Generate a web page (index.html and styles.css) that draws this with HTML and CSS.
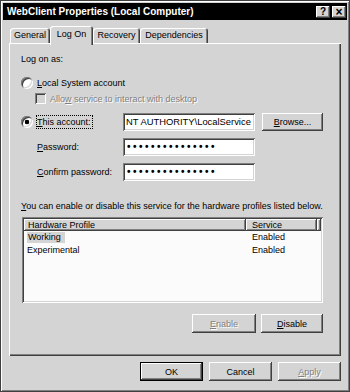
FILE: index.html
```html
<!DOCTYPE html>
<html>
<head>
<meta charset="utf-8">
<link rel="stylesheet" href="styles.css">
</head>
<body>
<div class="window">
  <div class="titlebar">
    <span class="title">WebClient Properties (Local Computer)</span>
    <div class="tb-buttons"><span class="tb-btn">?</span><span class="tb-btn tb-close">×</span></div>
  </div>
  <div class="tabs">
    <div class="tab t-general">General</div>
    <div class="tab selected t-logon">Log On</div>
    <div class="tab t-recovery">Recovery</div>
    <div class="tab t-deps">Dependencies</div>
  </div>
  <div class="panel">
    <div class="legend">Log on as:</div>
    <div class="radio-row"><span class="radio"></span><span><u>L</u>ocal System account</span></div>
    <div class="check-row"><span class="check"></span><span class="disabled">Allo<u>w</u> service to interact with desktop</span></div>
    <div class="field-row">
      <div class="lbl-radio"><span class="radio checked"></span><span class="focus"><u>T</u>his account:</span></div>
      <div class="field">NT AUTHORITY\LocalService</div>
      <button class="btn browse"><u>B</u>rowse...</button>
    </div>
    <div class="field-row pw-row">
      <div class="lbl"><u>P</u>assword:</div>
      <div class="field pw">•••••••••••••••</div>
    </div>
    <div class="field-row pw-row">
      <div class="lbl"><u>C</u>onfirm password:</div>
      <div class="field pw">•••••••••••••••</div>
    </div>
    <div class="note"><u>Y</u>ou can enable or disable this service for the hardware profiles listed below.</div>
    <div class="list">
      <div class="list-head">
        <div class="hcol c1">Hardware Profile</div>
        <div class="hcol c2">Service</div>
        <div class="hcol c3"></div>
      </div>
      <div class="list-row"><span class="c1"><span class="sel">Working</span></span><span class="c2">Enabled</span></div>
      <div class="list-row"><span class="c1">Experimental</span><span class="c2">Enabled</span></div>
    </div>
    <div class="list-buttons">
      <button class="btn btn-enable disabled"><u>E</u>nable</button>
      <button class="btn btn-disable"><u>D</u>isable</button>
    </div>
  </div>
  <div class="footer">
    <button class="btn default">OK</button>
    <button class="btn">Cancel</button>
    <button class="btn disabled"><u>A</u>pply</button>
  </div>
</div>
</body>
</html>
```

FILE: styles.css
```css
html, body {
  margin: 0;
  padding: 0;
  background: #d4d4d4;
}
body {
  font-family: "Liberation Sans", Arial, sans-serif;
  font-size: 9px;
  color: #000;
}
.window {
  width: 350px;
  height: 392px;
  box-sizing: border-box;
  background: #d4d4d4;
  border: 1px solid #404040;
  box-shadow: inset 1px 1px #fff, inset -1px -1px #808080;
  padding: 2px;
  display: flex;
  flex-direction: column;
}
.titlebar {
  height: 17px;
  flex: none;
  background: #000;
  color: #fff;
  display: flex;
  align-items: center;
  justify-content: space-between;
  padding: 0 1px 0 4px;
  font-weight: bold;
  font-size: 10px;
}
.tb-buttons {
  display: flex;
  gap: 2px;
}
.tb-btn {
  width: 14px;
  height: 12px;
  background: #d4d4d4;
  box-shadow: inset -1px -1px #404040, inset 1px 1px #fff, inset -2px -2px #808080;
  color: #000;
  font-size: 10px;
  font-weight: bold;
  line-height: 12px;
  text-align: center;
}
.tb-close {
  font-size: 12px;
}
.tabs {
  flex: none;
  display: flex;
  align-items: flex-end;
  height: 25px;
  margin: 0 6px -2px;
  padding-left: 1px;
  z-index: 1;
}
.tab {
  height: 15px;
  margin-bottom: 2px;
  box-sizing: border-box;
  background: #d4d4d4;
  border-radius: 3px 3px 0 0;
  box-shadow: inset 1px 1px #fff, inset -1px 0 #404040, inset -2px 0 #808080;
  text-align: center;
  line-height: 15px;
}
.t-general { width: 40px; }
.t-logon { width: 43px; }
.t-recovery { width: 47px; }
.t-deps { width: 68px; }
.tab.selected {
  height: 19px;
  margin-bottom: 0;
  line-height: 16px;
}
.panel {
  flex: none;
  margin: 0 6px;
  height: 313px;
  box-sizing: border-box;
  box-shadow: inset 1px 1px #fff, inset -1px -1px #404040, inset -2px -2px #808080;
  padding: 10px 12px 0 12px;
}
.legend {
  height: 13px;
  line-height: 13px;
}
.radio-row {
  display: flex;
  align-items: center;
  gap: 4px;
  height: 13px;
  margin-top: 10px;
}
.radio {
  flex: none;
  width: 12px;
  height: 12px;
  border-radius: 50%;
  background: #fff;
  box-shadow: inset 1px 1px #808080, inset -1px -1px #fff, inset 2px 2px #404040, inset -2px -2px #d4d4d4;
}
.radio.checked {
  background: radial-gradient(circle at 50% 50%, #000 0, #000 2px, #fff 2.6px);
}
.check-row {
  display: flex;
  align-items: center;
  gap: 4px;
  height: 13px;
  margin-top: 3px;
  padding-left: 14px;
}
.check {
  flex: none;
  width: 11px;
  height: 11px;
  background: #d4d4d4;
  box-shadow: inset 1px 1px #808080, inset -1px -1px #fff, inset 2px 2px #404040, inset -2px -2px #d4d4d4;
}
.disabled {
  color: #808080;
  text-shadow: 1px 1px #fff;
}
.field-row {
  display: flex;
  align-items: center;
  height: 18px;
  margin-top: 8px;
}
.pw-row {
  margin-top: 7px;
}
.lbl-radio {
  flex: none;
  width: 102px;
  display: flex;
  align-items: center;
  gap: 4px;
}
.focus {
  outline: 1px dotted #000;
  outline-offset: 0;
  padding: 0 1px 0 0;
  line-height: 12px;
}
.lbl {
  flex: none;
  width: 86px;
  padding-left: 16px;
}
.field {
  flex: none;
  width: 132px;
  height: 18px;
  box-sizing: border-box;
  background: #fff;
  box-shadow: inset 1px 1px #808080, inset -1px -1px #fff, inset 2px 2px #404040, inset -2px -2px #d4d4d4;
  padding: 0 3px;
  line-height: 18px;
  white-space: nowrap;
  overflow: hidden;
  font-size: 9.4px;
}
.field.pw {
  font-size: 10px;
  font-weight: bold;
  letter-spacing: 2.5px;
  padding-left: 4px;
}
.btn {
  flex: none;
  font: inherit;
  color: #000;
  height: 19px;
  width: 63px;
  border: 0;
  padding: 0;
  margin: 0;
  background: #d4d4d4;
  box-shadow: inset -1px -1px #404040, inset 1px 1px #fff, inset -2px -2px #808080;
}
.btn.browse {
  width: 61px;
  height: 18px;
  margin-left: 7px;
}
.btn.disabled {
  color: #808080;
  text-shadow: 1px 1px #fff;
}
.btn.default {
  box-shadow: inset 0 0 0 1px #000, inset -2px -2px #404040, inset 2px 2px #fff, inset -3px -3px #808080;
}
.note {
  height: 13px;
  line-height: 13px;
  margin-top: 19px;
  white-space: nowrap;
}
.list {
  margin: 4px 0 0 1px;
  width: 301px;
  height: 86px;
  box-sizing: border-box;
  padding: 2px;
  background: #fcfbfc;
  box-shadow: inset 1px 1px #808080, inset -1px -1px #fff, inset 2px 2px #404040, inset -2px -2px #d4d4d4;
}
.list-head {
  display: flex;
  height: 12px;
}
.hcol {
  height: 12px;
  line-height: 12px;
  box-sizing: border-box;
  background: #d4d4d4;
  box-shadow: inset -1px -1px #404040, inset 1px 1px #fff, inset -2px -2px #808080;
}
.hcol.c1 { width: 222px; padding-left: 4px; }
.hcol.c2 { width: 71px; padding-left: 6px; }
.hcol.c3 { flex: 1; }
.list-row {
  display: flex;
  height: 13px;
  line-height: 13px;
}
.list-row:first-of-type {
  margin-top: 1px;
}
.list-row .c1 {
  width: 222px;
  padding-left: 3px;
  box-sizing: border-box;
}
.list-row .c2 {
  padding-left: 6px;
}
.sel {
  display: inline-block;
  background: #d4d4d4;
  padding: 0 4px 0 1px;
  line-height: 11px;
}
.list-buttons {
  display: flex;
  justify-content: flex-end;
  gap: 5px;
  width: 302px;
  margin: 11px 0 0 0;
}
.btn-enable { width: 64px; }
.btn-disable { width: 62px; }
.footer {
  display: flex;
  justify-content: flex-end;
  gap: 6px;
  margin: 6px 6px 0;
}
```
